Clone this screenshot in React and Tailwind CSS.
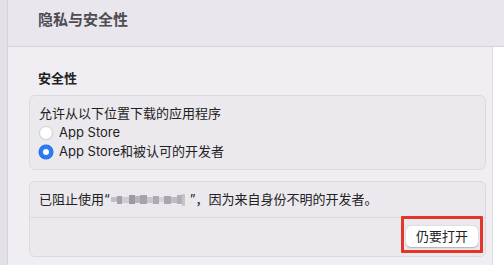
import React from 'react';

const FONT = { fontFamily: 'Inter, "Noto Sans CJK SC", sans-serif' };

const Radio = ({ checked, label }) => (
  <label className="flex items-center h-[19px] gap-[6px]">
    {checked ? (
      <span className="w-[14px] h-[14px] rounded-full bg-[#2b7bf3] flex items-center justify-center shadow-[0_0_0_0.5px_#1d64d6]">
        <span className="w-[6px] h-[6px] rounded-full bg-white" />
      </span>
    ) : (
      <span className="w-[14px] h-[14px] rounded-full bg-white border border-[#d2d0d6] shadow-[0_0.5px_1px_rgba(0,0,0,0.08)]" />
    )}
    <span className="text-[13px] text-[#222]">{label}</span>
  </label>
);

// 打码的应用名
const REDACT = [
  ['w-[6px]', 'h-[5px]', 'bg-[#c2c0c6]'],
  ['w-[5px]', 'h-[8px]', 'bg-[#a3a1a7]'],
  ['w-[7px]', 'h-[6px]', 'bg-[#cfcdd3]'],
  ['w-[6px]', 'h-[9px]', 'bg-[#9c9aa0]'],
  ['w-[5px]', 'h-[7px]', 'bg-[#b7b5bb]'],
  ['w-[7px]', 'h-[9px]', 'bg-[#a6a4aa]'],
  ['w-[6px]', 'h-[6px]', 'bg-[#c9c7cd]'],
  ['w-[6px]', 'h-[8px]', 'bg-[#adabb1]'],
  ['w-[5px]', 'h-[5px]', 'bg-[#d4d2d8]'],
  ['w-[7px]', 'h-[8px]', 'bg-[#a9a7ad]'],
  ['w-[6px]', 'h-[6px]', 'bg-[#bebcc2]'],
  ['w-[5px]', 'h-[9px]', 'bg-[#b1afb5]'],
  ['w-[3px]', 'h-[12px]', 'bg-[#c6c4ca]'],
];

const Redacted = () => (
  <span className="inline-flex items-center w-[78px] h-[12px] align-middle blur-[0.6px] mx-[1px]">
    {REDACT.map(([w, h, bg], i) => (
      <span key={i} className={`${w} ${h} ${bg}`} />
    ))}
  </span>
);

export default function App() {
  return (
    <div className="w-[504px] h-[265px] flex overflow-hidden bg-[#f0eef3]" style={FONT}>
      <div className="w-[8px] bg-[#e3e1e7] border-r border-[#d6d4da]" />

      <div className="flex-1 flex flex-col">
        <div className="h-[47px] shrink-0 bg-[#e9e6ee] border-b border-[#d5d3da] flex items-center pl-[30px] pb-[5px]">
          <h1 className="text-[15px] font-bold text-[#4d4c51]">隐私与安全性</h1>
        </div>

        <div className="flex-1 flex">
          <div className="flex-1 pl-[21px] pr-[6px] pt-[22px]">
            <h3 className="text-[13px] font-bold text-[#1f1f1f] leading-[18px] pl-[9px]">安全性</h3>

            {/* 下载来源 */}
            <div className="mt-[8px] h-[75px] rounded-[6px] bg-[#ebe9ee] border border-[#dcdadf] pl-[9px] pt-[8px]">
              <p className="text-[13px] text-[#222] leading-[19px]">允许从以下位置下载的应用程序</p>
              <Radio label="App Store" />
              <Radio checked label="App Store和被认可的开发者" />
            </div>

            {/* 被阻止的应用 */}
            <div className="mt-[11px] h-[76px] rounded-[6px] bg-[#ebe9ee] border border-[#dcdadf] flex flex-col">
              <div className="h-[36px] shrink-0 flex items-center pl-[9px] text-[13px] text-[#222] border-b border-[#dcdadf]">
                <span>已阻止使用“</span>
                <Redacted />
                <span>”，因为来自身份不明的开发者。</span>
              </div>
              <div className="flex-1 flex items-start justify-end pr-[7px] pt-[8px]">
                <div className="relative">
                  <button className="w-[72px] h-[21px] rounded-[5px] bg-white text-[13px] text-[#222] shadow-[0_0.5px_1.5px_rgba(0,0,0,0.25)] flex items-center justify-center">
                    仍要打开
                  </button>
                  <div className="absolute left-[-5px] right-[-5px] top-[-10px] bottom-[-6px] border-[3px] border-[#e4352b] rounded-[1px] pointer-events-none" />
                </div>
              </div>
            </div>
          </div>
          <div className="w-[12px] bg-white border-l border-[#dcdadf]" />
        </div>
      </div>
    </div>
  );
}
